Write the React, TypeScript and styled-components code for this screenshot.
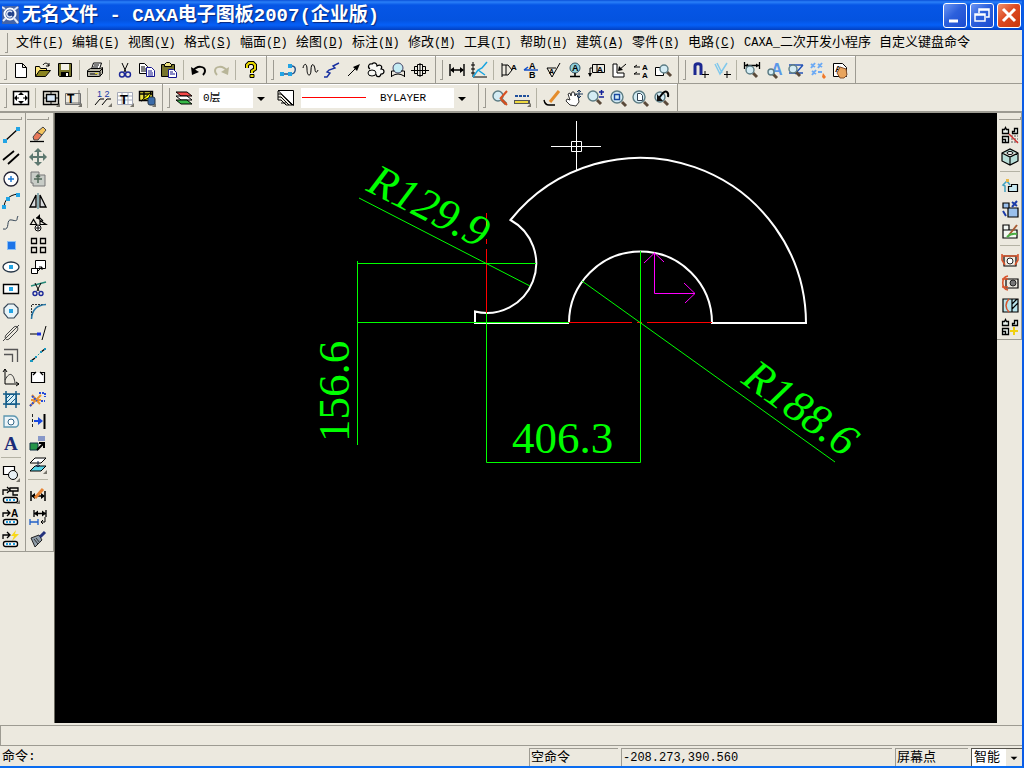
import React from 'react';
import styled, { createGlobalStyle, css } from 'styled-components';

const face = '#ece9df';
const shadow = '#9d9b92';
const mono = '"Liberation Mono", "Noto Sans CJK SC", monospace';

const GlobalStyle = createGlobalStyle`
  * { box-sizing: border-box; }
  body { margin: 0; background: ${face}; color: #000; font-family: ${mono}; font-size: 13px; }
  button, select { font: inherit; color: inherit; }
`;

const Window = styled.div`
  display: flex;
  flex-direction: column;
  height: 100vh;
  background: ${face};
  border-right: 2px solid #0a5ce6;
  border-bottom: 2px solid #0a6cf0;
  overflow: hidden;
`;

const TitleBar = styled.header`
  display: flex;
  align-items: center;
  gap: 3px;
  flex: none;
  height: 30px;
  padding: 0 3px 0 2px;
  margin-right: -2px;
  background: linear-gradient(#0a50d8 0, #2a80f8 2px, #0656e6 5px, #0453e0 20px, #0560f8 25px, #0340c0 30px);
`;

const Title = styled.h1`
  flex: 1;
  margin: 0;
  padding-top: 2px;
  color: #fff;
  font: bold 19px/28px ${mono};
  text-shadow: 1px 1px 1px #0a2a80;
  white-space: nowrap;
`;

const WindowButton = styled.button<{ $danger?: boolean }>`
  display: grid;
  place-items: center;
  width: 24px;
  height: 25px;
  padding: 0;
  border: 1px solid #fff;
  border-radius: 3px;
  background: ${p => p.$danger
    ? 'linear-gradient(135deg, #f0906c, #dd4a22 45%, #c8360c)'
    : 'linear-gradient(135deg, #6c96f4, #2c60dc 45%, #1c4cd0)'};
`;

const MenuBar = styled.nav`
  display: flex;
  align-items: center;
  flex: none;
  height: 25px;
  padding-left: 5px;
  gap: 8px;
`;

const Grip = styled.span<{ $across?: boolean }>`
  flex: none;
  border: 1px solid ${shadow};
  ${p => p.$across
    ? css`width: 22px; height: 3px; border-width: 0 1px 1px 0; margin: 4px 0;`
    : css`width: 3px; height: 20px; border-width: 0 1px 1px 0;`}
`;

const MenuItem = styled.button`
  min-width: 48px;
  padding: 0;
  border: 0;
  background: none;
  line-height: 20px;
  text-align: left;
  white-space: nowrap;
`;

const Latin = styled.span`
  font-size: 12px;
`;

const ToolRow = styled.div`
  display: flex;
  flex: none;
  height: 28px;
  border-top: 1px solid ${shadow};
`;

const ToolGroup = styled.div`
  display: flex;
  align-items: center;
  padding: 0 4px 0 10px;
  border-right: 1px solid ${shadow};
  box-shadow: inset 0 1px #fff;

  > ${Grip} { margin: 0 3px 0 -6px; }
`;

const ToolButton = styled.button`
  display: grid;
  place-items: center;
  flex: none;
  width: 22px;
  height: 22px;
  padding: 0;
  border: 0;
  background: none;
  svg { display: block; overflow: visible; }
`;

const Divider = styled.span<{ $across?: boolean }>`
  flex: none;
  background: #b4b2a4;
  ${p => p.$across
    ? css`width: 20px; height: 1px; margin: 3px 0 4px;`
    : css`width: 1px; height: 20px; margin: 0 4px 0 3px;`}
`;

const Combo = styled.label<{ $w: number; $gap: number }>`
  display: flex;
  align-items: center;
  position: relative;
  width: ${p => p.$w}px;
  height: 20px;
  margin: 0 ${p => p.$gap}px 0 4px;
  background: #fff;
  font-size: 11px;
`;

const Arrow = styled.svg`
  position: absolute;
  right: 0;
  top: 0;
  width: 16px;
  height: 100%;
  background: ${face};
  pointer-events: none;
`;

const ComboSelect = styled.select<{ $indent: number }>`
  appearance: none;
  width: 100%;
  height: 100%;
  padding: 0 16px 0 ${p => p.$indent}px;
  border: 0;
  border-radius: 0;
  background: transparent;
`;

const LineSample = styled.span`
  position: absolute;
  left: 1px;
  top: 9px;
  width: 64px;
  height: 1px;
  background: #f00;
`;

const Workspace = styled.main`
  display: flex;
  flex: 1;
  min-height: 0;
  border-top: 2px solid ${shadow};
`;

const Dock = styled.aside`
  display: flex;
  flex: none;
  align-items: flex-start;
`;

const DockColumn = styled.div<{ $w: number; $left?: boolean }>`
  display: flex;
  flex-direction: column;
  align-items: center;
  width: ${p => p.$w}px;
  padding: ${p => (p.$left ? '0 3px 1px 0' : '0 0 1px 2px')};
  border-right: 1px solid ${shadow};
  border-bottom: 1px solid ${shadow};
`;

const Canvas = styled.section`
  flex: 1;
  min-width: 0;
  overflow: hidden;
  background: #000;
  border-left: 1px solid #6c6a60;
  svg { display: block; }
`;

const CommandPanel = styled.div`
  flex: none;
  height: 21px;
  margin-top: 2px;
  border: 1px solid ${shadow};
  border-right: 0;
`;

const StatusBar = styled.footer`
  display: flex;
  flex: none;
  align-items: center;
  gap: 3px;
  height: 20px;
  padding: 2px 0 0 2px;
  line-height: 18px;
  white-space: nowrap;
`;

const Prompt = styled.span`
  flex: 1;
`;

const StatusField = styled.span<{ $w: number }>`
  width: ${p => p.$w}px;
  height: 18px;
  padding-left: 1px;
  border-left: 1px solid ${shadow};
  border-top: 1px solid ${shadow};
`;

const SnapCombo = styled.label`
  position: relative;
  width: 51px;
  height: 18px;
  background: #fff;
  border: 1px solid #55534c;
  border-width: 1px 0 0 1px;
`;

const L = ({ d, c = '#000', f = 'none', w = 1 }: { d: string; c?: string; f?: string; w?: number }) => (
  <path d={d} stroke={c} fill={f} strokeWidth={w} />
);
const T = ({ x, y, s = 9, c = '#000', b, children }: { x: number; y: number; s?: number; c?: string; b?: boolean; children: React.ReactNode }) => (
  <text x={x} y={y} fontSize={s} fill={c} fontWeight={b ? 'bold' : 'normal'} fontFamily="Liberation Sans, sans-serif">{children}</text>
);
const Lens = ({ x = 8, y = 7, r = 5 }: { x?: number; y?: number; r?: number }) => (
  <>
    <path d={`M${x + r - 1} ${y + r - 1}l4 4`} stroke="#5a4a3a" strokeWidth="3" />
    <circle cx={x} cy={y} r={r} fill="#d4ecf4" stroke="#5c7c84" strokeWidth="1.4" />
  </>
);
const Corner = () => <path d="M18 14v4h-4z" fill="#77756c" />;
const Pts = ({ at }: { at: number[][] }) => (
  <>{at.map(([x, y]) => <rect key={`${x},${y}`} x={x - 2} y={y - 2} width="4" height="4" fill="#22a4e4" />)}</>
);
const Tag = () => (
  <>
    <rect x="1.5" y="11.500" width="14" height="5" rx="2" fill="#fff" stroke="#000" strokeWidth="1.4" />
    <path d="M4 14h2M7 14h2M11 14h2" stroke="#20a0e0" strokeWidth="2" />
  </>
);

const icons: Record<string, React.ReactNode> = {
  新建: <L d="M3.500 2.500h7l4 4v10h-11zM10.500 2.500v4h4" f="#fff" />,
  打开: <><L d="M1.500 15.500v-10h4l1 2h6v2" f="#ffe880" /><L d="M1.500 15.500l4-6h11l-5 6z" f="#8a8420" /><L d="M9 4c2-3 5-2 6 1m0-3v3h-3" /></>,
  保存: <><L d="M2.500 2.500h13v13h-12l-1-1z" f="#77752c" /><path d="M5 3h8v6H5z" fill="#f4f2e8" /><path d="M5 11h8v4H5z" fill="#000" /><path d="M10 12h2v3h-2z" fill="#fff" /></>,
  打印: <><L d="M5.500 8l2-6h8l-2 6" f="#fff" /><L d="M8 4h5M7 6h5" /><L d="M1.500 9.500l3-2h10l2-1v6l-3 3h-12z" f="#b8b6a8" /><L d="M2 10.500h12v5M14 10l2-2M4 13h7" /><path d="M9 12h3v1H9z" fill="#e0d020" /></>,
  剪切: <><L d="M6 2l4 9M12 2L8 11" /><circle cx="6" cy="13.500" r="2.500" fill="none" stroke="#1c2898" strokeWidth="1.400" /><circle cx="12" cy="13.500" r="2.500" fill="none" stroke="#1c2898" strokeWidth="1.400" /></>,
  复制: <><L d="M1.500 2.500h5l3 3v7h-8zM3 6h4M3 8h5M3 10h5" f="#fff" /><L d="M8.500 6.500h5l3 3v6h-8zM10 10h4M10 12h5M10 14h5" c="#14148c" f="#fff" /></>,
  粘贴: <><L d="M1.500 3.500h13v12h-13z" f="#77752c" /><L d="M4.500 5.500v-2l2-2h3l2 2v2z" f="#ece080" /><L d="M8.500 8.500h5l3 3v5h-8zM10 11h3M10 13h5" c="#14148c" f="#fff" /></>,
  撤销: <><L d="M3 10c4-6 12-5 12 0 0 2-1 3-2 4" w={2} /><path d="M1 6l1 8 7-3z" /></>,
  重做: <><L d="M15 10C11 4 3 5 3 10c0 2 1 3 2 4" w={2} c="#b8b598" /><path d="M17 6l-1 8-7-3z" fill="#b8b598" /></>,
  帮助: <><L d="M5 7V4l2-2h4l2 2v4l-3 2v2" c="#000" w={4} /><L d="M5 7V4l2-2h4l2 2v4l-3 2v2" c="#e8d800" w={2} /><path d="M8 13.500h4v3H8z" fill="#e8d800" stroke="#000" /></>,
  连接: <><L d="M2 13h10c5 0 6-8 1-8h-2" c="#205088" w={1.400} /><Pts at={[[3, 13], [11, 13], [11, 5]]} /></>,
  波浪线: <L d="M2 7c1-5 4-5 4 1 0 8 4 8 4 1s3-7 4-1c0 4 2 4 3 1" />,
  双折线: <L d="M1 16h3l3-4-3-1 2-2 6-2-2-2 6-3" c="#1830a0" w={1.400} />,
  箭头: <><L d="M3 15L12 6" /><path d="M15 3L8 6l4 4z" /></>,
  轮廓: <><L d="M3 8C0 6 2 2 5 3c2-2 5-1 5 2 3-2 6 0 4 3 4 0 4 5 0 5-1 4-5 3-5 0" f="#f8f8f4" w={1.200} /><ellipse cx="5" cy="12" rx="4" ry="3" fill="#f8f8f4" stroke="#000" /></>,
  圆孔: <><circle cx="9" cy="7" r="5" fill="#c4ecf4" stroke="#446" /><L d="M2.500 16v-6h3M12 10h3.500v6M3 15q6-4 12 0" /></>,
  孔轴: <><L d="M3.500 5.500h11v7h-11z" /><path d="M6.500 3.500h5v11h-5z" fill="#f4f2ea" stroke="#000" /><L d="M0 9.500h18M9 2v14" /></>,
  尺寸标注: <><L d="M2 3v12M16 3v12M3 9h12" w={1.400} /><path d="M2 9l4-3v6zM16 9l-4-3v6z" /></>,
  坐标标注: <><L d="M3 1v15h14M1 4h4M1 8h4M1 12h4" /><L d="M3 16L8 9l4-2 5-6M8 9l7 5" c="#18a4e0" w={1.500} /></>,
  倒角标注: <><L d="M2 2v14M2 4h6l4 5-4 5H2M6 4v10" /><T x={11} y={9} s={8} b>A</T></>,
  引出说明: <><T x={7} y={8} s={9} b>A</T><T x={7} y={17} s={9} b>B</T><L d="M2 9h14M2 9l4-3" c="#1450c8" w={1.500} /></>,
  粗糙度: <><L d="M3 7l5 9 8-14M3 7h9" /><T x={5} y={13} s={7} b>A</T></>,
  基准代号: <><circle cx="9" cy="7" r="5" fill="#8fd0dc" stroke="#356" /><T x={6} y={10} s={9} b>A</T><L d="M9 12v3M4 15.500h10" w={1.600} /></>,
  形位公差: <><L d="M4.500 3.500h12v8h-12zM9 4v7M4 7H2v8" /><T x={9} y={11} s={8} b>A</T><path d="M0 12h4l-2 4z" /></>,
  焊接符号: <><L d="M3 3v13h11v-4H7V3zM16 3l-7 6" f="#fff" /><path d="M8 10l1-5 4 4z" /></>,
  剖切符号: <><L d="M2 6h6M2 6l3-2M2 13h6M2 13l3-2" /><T x={10} y={9} s={8} b>A</T><T x={10} y={17} s={8} b>A</T></>,
  局部放大: <><L d="M1.500 6.500h8v8h-8z" f="#fff" /><Lens x={10} y={8} r={4} /></>,
  捕捉设置: <><L d="M4 14V5c0-3 6-3 6 0v9" c="#1c2890" w={3} /><L d="M14 10v7M11 13.500h7" /></>,
  正交: <><L d="M2 3l5 10L14 2M4 2l5 10" c="#80c8ec" w={1.500} /><L d="M14 10v7M11 13.500h7" /></>,
  查询距离: <><L d="M1.500 1v7M16.500 1v7M2 4.500h14" w={1.300} /><path d="M2 4.500l3-2v4zM16 4.500l-3-2v4z" /><Lens x={7} y={9} r={4} /></>,
  查询文字: <><T x={6} y={14} s={16} c="#5c98e8" b>A</T><Lens x={6} y={11} r={3} /></>,
  查询面积: <><L d="M2 4h14M2 12h14M16 4L8 13" c="#2454b8" w={1.500} /><Lens x={6} y={8} r={4} /></>,
  阵列点: <><L d="M2 3l4 3M6 2L2 7M9 3l4 3M13 2L9 7M3 10l4 3M7 9l-4 5M9 11h4" c="#6caaf4" w={2} /><path d="M14 12l3 4-2 2-2-2z" fill="#f07828" /></>,
  图纸属性: <><L d="M2.500 2.500h9l4 4v9h-13z" f="#fff" /><T x={4} y={11} s={9} b>A</T><path d="M6 12l3-6 6 2 1 6-3 3H9z" fill="#e8a45c" stroke="#84502c" /></>,
  显示全部: <><L d="M1.500 2.500h15v13h-15z" w={1.500} f="#fff" /><path d="M9 3l3 3H6zM9 15l3-3H6zM2 9l3-3v6zM16 9l-3-3v6z" /><L d="M5 9h2M11 9h2" /></>,
  图幅设置: <><L d="M1.500 2.500h15v13h-15z" w={1.400} /><L d="M4.500 5.500h9v7h-9z" f="#d8e8f8" w={1.400} /><L d="M9 2v4M9 12v4M1 9h4M13 9h4" /><Corner /></>,
  标题栏: <><L d="M1.500 4.500h15v11h-15zM15 1v15M1 14h16" c="#707070" /><T x={3} y={14} s={12} b>T</T><Corner /></>,
  序号: <><T x={3} y={8} s={9} c="#1838a8">1 2</T><L d="M1 16l5-6h4M8 16l5-6h4" /><Corner /></>,
  明细表: <><L d="M1.500 3.500h15v12h-15zM6 3v12M12 3v12M1 7h15M1 11h15" c="#a5aab8" f="#fff" /><T x={4} y={15} s={13} b>T</T><Corner /></>,
  表头: <><L d="M1.500 2.500h13v9h-13zM1 5h13M6 2v9" f="#ece040" w={1.400} /><path d="M3 12l10-9-2 6z" stroke="#000" fill="#ff0" /><rect x="10" y="8" width="7" height="8" rx="2" fill="#3c6ca8" stroke="#234" /><Corner /></>,
  图层: <><L d="M1 3h11l5 4H6z" f="#f44848" /><L d="M1 7h11l5 4H6z" f="#fff" /><L d="M1 11h11l5 4H6z" f="#38b848" /></>,
  线型: <><path d="M1 1.500h15.500v15z" fill="#fff" stroke="#000" /><L d="M1 2v3h3L15 16M1 5v3h3l8 8M1 8v3h3l5 5M4 14h5M9 16h7" /></>,
  显示窗口: <><Lens x={7} y={7} r={5} /><L d="M16 2l-7 8M10 10l6 6" c="#d85020" w={2} /></>,
  线宽: <><path d="M2 7h14" stroke="#20509c" strokeWidth="2" strokeDasharray="3 1" /><path d="M1 11h16v4H1z" fill="#555" /><L d="M2 13h13" c="#ecd840" w={2} /><Corner /></>,
  重画: <><L d="M16 2L7 13" c="#e48c2c" w={3} /><L d="M1 11q1 5 5 5h6" w={1.400} /></>,
  动态平移: <><path d="M5 16l-4-4 1-2 3 1-2-6 2-1 1 3 1-4h2l1 4 1-2 2 2 1 6-3 4z" fill="#fff" stroke="#333" /><L d="M14 1v8M10 5h8M12 3l2-2 2 2M12 7l2 2 2-2" c="#183458" /></>,
  动态缩放: <><Lens x={6} y={7} r={5} /><L d="M12 3h5M14.500 1v5M12 8h5" c="#122098" w={1.500} /></>,
  窗口缩放: <><Lens x={8} y={8} r={6} /><L d="M5.500 5.500h5v5h-5z" c="#1848a0" w={1.400} /></>,
  全部缩放: <><Lens x={8} y={8} r={6} /><L d="M6.500 4.500h3l2 2v5h-5z" c="#345" f="#fff" /></>,
  显示上一步: <><Lens x={7} y={8} r={5} /><L d="M6 9l4-5c3-3 6-1 5 4" w={2} /><path d="M4 5v7h6z" fill="#111" /></>,
  直线: <><L d="M3 15L16 3" w={1.300} /><Pts at={[[3, 15], [16, 3]]} /></>,
  平行线: <><L d="M1 12L12 3M6 16L17 6" w={1.800} /></>,
  圆: <><circle cx="9" cy="9" r="7" fill="#fff" stroke="#223" strokeWidth="1.300" /><L d="M9 6v6M6 9h6" c="#1874d0" w={1.400} /></>,
  圆弧: <><L d="M2 16C2 8 7 3 16 2" /><Pts at={[[2, 15], [6, 7], [16, 3]]} /></>,
  样条: <L d="M1 15c8 2 2-11 9-9s4-1 6-4" c="#345" />,
  点: <rect x="5.500" y="5.500" width="8" height="8" fill="#1c74e8" stroke="#8cc0f4" />,
  椭圆: <><ellipse cx="9" cy="9" rx="8" ry="5" fill="#fff" stroke="#234" strokeWidth="1.300" /><Pts at={[[9, 9]]} /></>,
  矩形: <><L d="M1.500 4.500h15v9h-15z" f="#fff" w={1.400} /><Pts at={[[9, 9]]} /></>,
  正多边形: <><path d="M6 2h6l4 4v5l-4 5H6l-4-5V6z" fill="#e8f4f8" stroke="#345" strokeWidth="1.200" /><Pts at={[[9, 9]]} /></>,
  中心线: <><L d="M4 11l8-8c3-2 5 1 3 4l-8 8c-3 2-5-1-3-4zM1 17L17 1" c="#444" /></>,
  等距线: <><L d="M2 3.500h13.500V16M2 8.500h8.500V16" c="#555" w={1.300} /></>,
  公式曲线: <><L d="M3 1v15h14M1 4l2-3 2 3M14 14l3 2-3 2" /><L d="M3 12c5-10 9-5 10 3" c="#333" /></>,
  剖面线: <><L d="M4.500 4.500h10v10h-10z" f="#d8f0f8" c="#146090" /><L d="M4 1v17M14 1v17M1 4h17M1 14h17" c="#145c88" w={1.500} /><L d="M5 8l3-3M5 12l7-7M8 14l6-6" c="#145c88" /></>,
  填充: <><path d="M2 4h9c6 0 7 10 3 11H2z" fill="#ecf4f8" stroke="#5c96b0" strokeWidth="1.300" /><circle cx="9" cy="10" r="3" fill="#fff" stroke="#368" /></>,
  文字: <text x="2" y="16" fontSize="19" fontWeight="bold" fontFamily="Liberation Serif, serif" fill="#1c2c78">A</text>,
  块创建: <><L d="M1.500 2.500h11v8h-11z" f="#fff" w={1.200} /><circle cx="11" cy="11" r="4.500" fill="#e8f0f4" stroke="#000" /><Corner /></>,
  块插入: <><L d="M1 9V4h5M5 1l3 3-3 3M8 2h8v3H8zM11 5v4h5" w={1.300} /><Tag /><Corner /></>,
  块属性: <><L d="M1 9V5h6M5 2l3 3-3 3" w={1.300} /><T x={9} y={9} s={10} b>A</T><Tag /></>,
  块打散: <><L d="M1 9V5h6M5 2l3 3-3 3" w={1.300} /><path d="M14 0l-5 6h3l-2 5 7-7h-4z" fill="#f8d818" /><Tag /></>,
  删除: <><L d="M1 15.500h14" w={1.300} /><path d="M4 11l4-5 5 3-4 5H5z" fill="#e87858" stroke="#444" /><path d="M8 6l6-5 3 3-4 5z" fill="#f4c45c" stroke="#444" /></>,
  平移: <><L d="M9 2v14M2 9h14" c="#5d786f" w={2} /><path d="M9 0l4 4H5zM9 18l4-4H5zM0 9l4-4v8zM18 9l-4-4v8z" fill="#5d786f" /></>,
  平移复制: <><L d="M2 2h8v3h6v11H4v-3H2z" f="#c8ccc6" c="#777" /><L d="M9 5v8M5 9h8M7 7l2-2 2 2" c="#506858" w={1.500} /></>,
  镜像: <><L d="M7 3v12H1zM11 3v12h6z" w={1.300} f="#d9dbdc" /><L d="M9 1v16" c="#286c80" /></>,
  旋转: <><L d="M1.500 10.500l3-5 3 5zM7 4h4l3 3M11 6.500l6 4h-6z" w={1.200} /><path d="M11 0v6L7 4z" /><circle cx="9" cy="14" r="3" fill="#fff" stroke="#000" /><L d="M9 12v4M7 14h4" /></>,
  阵列: <L d="M2.500 2.500h5v5h-5zM11.500 2.500h5v5h-5zM2.500 11.500h5v5h-5zM11.500 11.500h5v5h-5z" w={1.300} />,
  缩放: <L d="M6.500 2.500h10v8h-10zM2.500 10.500h6v5h-6zM9 13l4-4M10 9h3v3" f="#fff" />,
  裁剪: <><L d="M2 6l15-4" c="#268878" w={1.400} /><L d="M6 3l4 8M12 3L8 11" /><circle cx="6" cy="13.500" r="2" fill="none" stroke="#1c2898" strokeWidth="1.400" /><circle cx="12" cy="13.500" r="2" fill="none" stroke="#1c2898" strokeWidth="1.400" /></>,
  过渡: <><path d="M2.500 17V2.500H17" fill="none" stroke="#333" strokeDasharray="2 1" /><L d="M2.500 17C3 8 8 3 17 2.500" c="#2474a4" w={1.500} /></>,
  齐边: <><L d="M1 10h8M17 2l-4 14" /><L d="M8 10h4" c="#1830e0" w={3} /></>,
  打断: <><L d="M2 15l4-3M12 6l4-3" w={1.500} /><path d="M6 12l6-6" stroke="#1c9c9c" strokeDasharray="2 2" /><path d="M1 14h3v2H1zM6 10h2v2H6zM11 5h2v2h-2zM15 2h2v2h-2z" fill="#1898c0" /></>,
  拉伸: <><L d="M6 4.500H2.500v10h13v-10H12M4 7l3-3M14 7l-3-3" w={1.200} f="#fff" /></>,
  打散: <><L d="M1 16L12 5M3 5l8 9M2 10h10" c="#ec9430" w={2} /><path d="M1 16l4-4M3 6l5 5M10 3h6v4M12 11h4" stroke="#284cd8" strokeWidth="2" strokeDasharray="2 1" fill="none" /></>,
  对齐: <><path d="M3.500 2v15" stroke="#222" strokeDasharray="3 2" /><L d="M15.500 2v15" w={2} /><path d="M5 8h4V5l5 4-5 4v-3H5z" fill="#1848e0" /></>,
  格式刷: <><path d="M1 9h8v7H1z" fill="#249448" stroke="#134" /><path d="M9 2h7v5H9z" fill="#8898c8" /><L d="M8 16l6-6M10 9h5v5" w={2} /></>,
  图层转换: <><L d="M6 2h11l-5 5H1z" f="#fff" /><L d="M6 10h11l-5 5H1z" f="#58d4e8" /><L d="M9 5v6M7 9l2 2 2-2" c="#124" /><Corner /></>,
  标注编辑: <><L d="M2 5v10M16 5v10M3 10h12" w={1.500} /><path d="M2 10l4-3v6zM16 10l-4-3v6z" /><L d="M14 3l-8 9" c="#e88434" w={3} /></>,
  尺寸驱动: <><L d="M5 2v7M17 2v7M5 5.500h12" w={1.300} /><path d="M5 5.500l4-3v6zM17 5.500l-4-3v6z" /><L d="M1 11v6M9 11v6M1 14h8" c="#2060c8" w={1.300} /><L d="M16 9v5h-4M14 12l-2 2 2 2" /></>,
  样式刷: <><path d="M2 8l8-3 3 5-7 7z" fill="#8e9ca8" stroke="#222" /><L d="M11 7l5-5" c="#24327c" w={3} /><L d="M5 9l4 5M7 8l4 5" c="#333" /></>,
  图库: <><L d="M1.500 3.500h2l1-2 1 2h2v4h-6zM11.500 5.500h2v-3h3v5h-5zM1.500 10.500h6v6h-6zM1.500 13.500h3v3" w={1.300} f="#e8f0ec" /><path d="M10 10h7M10 13h7M10 16h7" stroke="#555" strokeDasharray="2 1" /><L d="M8 8l9 9" c="#d03030" w={1.400} /></>,
  三维: <><L d="M1 5l8-4 8 4v8l-8 4-8-4zM1 5l8 4 8-4M9 9v8" f="#b8ded8" w={1.200} /><ellipse cx="9" cy="5" rx="3" ry="1.500" fill="#fff" stroke="#000" /></>,
  提取图符: <><L d="M7.500 8.500h3v-2h6v7h-9z" f="#c8e8f0" w={1.200} /><L d="M4 14V8L2 7l4-4 3 4" c="#40a0c0" w={1.500} /><path d="M5 1h3v3H5z" fill="#e8b848" /></>,
  定义图符: <><L d="M2 3h6v5H2zM7 8h10v9H7z" f="#9ac0ec" w={1.200} /><L d="M2 11l3 5M11 2l5 4M16 1l-5 6" c="#1c3ca8" w={2} /></>,
  编辑图符: <><L d="M2 3h6v5H2zM2 8h14v8H2z" f="#f4f8f4" w={1.200} /><L d="M16 3L8 13" c="#a85c34" w={2} /><L d="M6 15q4-4 10-3" c="#4cae44" w={2} /></>,
  螺栓: <><L d="M3 4h12v10H3z" w={1.200} /><circle cx="9" cy="9" r="3" fill="#fff" stroke="#222" /><L d="M1 2v6l3 5M17 2v6l-3 5M1 4h16" c="#d8542c" w={1.600} /></>,
  零件断面: <><L d="M5 5h12v9H5z" w={1.200} /><circle cx="12" cy="9" r="3" fill="#777" stroke="#222" /><L d="M7 2c-7 1-7 13 0 14M1 5h6M1 13h6" c="#d8542c" w={1.600} /></>,
  剖面图: <><L d="M2 3h15v13H2zM11 3v13M11 8l5-5M11 13l6-6" f="#b8e4ec" w={1.200} /><L d="M8 3c-4 4-4 9 0 13" c="#d8542c" w={1.500} /></>,
  图库管理: <><L d="M1.500 3.500h2l1-2 1 2h2v4h-6zM11.500 5.500h2v-3h3v5h-5zM1.500 10.500h6v6h-6zM1.500 13.500h3v3" w={1.300} f="#e8f0ec" /><L d="M13 9v8M9 13h8" c="#f0d010" w={2} /></>,
};

const Tool = ({ name }: { name: string }) => (
  <ToolButton type="button" aria-label={name}>
    <svg width="18" height="18" viewBox="0 0 18 18" aria-hidden="true">{icons[name]}</svg>
  </ToolButton>
);

/* A "|" entry in a tool list is a divider. */
const Tools = ({ list, across }: { list: string; across?: boolean }) => (
  <>{list.split(' ').map((n, i) => (n === '|' ? <Divider key={i} $across={across} /> : <Tool key={n} name={n} />))}</>
);

const ComboArrow = () => (
  <Arrow viewBox="0 0 16 20" aria-hidden="true"><path d="M4 9h8l-4 4z" /></Arrow>
);

const menus = [
  ['文件', 'F'], ['编辑', 'E'], ['视图', 'V'], ['格式', 'S'], ['幅面', 'P'], ['绘图', 'D'], ['标注', 'N'],
  ['修改', 'M'], ['工具', 'T'], ['帮助', 'H'], ['建筑', 'A'], ['零件', 'R'], ['电路', 'C'],
];

const Drawing = () => (
  <svg width="942" height="610" viewBox="55 113 942 610" role="img" aria-label="图形">
    <g fill="none" stroke="#fff" strokeWidth="2">
      <path d="M569 323H475V311.500A49.500 49.500 0 0 0 510.500 220A166 166 0 0 1 806 323H712A71.500 71.500 0 0 0 569 323" />
    </g>
    <g fill="none" stroke="#f00">
      <path d="M569 322.500H632M637 322.500H642M647 322.500H712M486.500 213V233M486.500 239V244M486.500 249V313" />
    </g>
    <g fill="none" stroke="#0f0">
      <path d="M357 322.500H569M357 263.500H536M357.500 261V445M486.500 313V462.500H640.500V251" />
      <path d="M359 198L530 286M582 281L835 462" />
    </g>
    <path d="M654.500 253V293.500H695M644 263L654.500 253L664 262M684 283L695 293.500L685 303" fill="none" stroke="#f0f" />
    <path d="M551 146.500H601M576.500 121V170M571.500 141.500h10v10h-10z" fill="none" stroke="#fff" />
    <g fill="#0f0" fontFamily="Liberation Serif, serif" fontSize="45">
      <text x="512" y="453">406.3</text>
      <text transform="translate(349 442) rotate(-90)">156.6</text>
      <text transform="translate(365 190) rotate(27)" fontStyle="italic">R129.9</text>
      <text transform="translate(740 382) rotate(36)" fontStyle="italic">R188.6</text>
    </g>
  </svg>
);

export default function App() {
  return (
    <>
      <GlobalStyle />
      <Window>
        <TitleBar>
          <svg width="17" height="18" viewBox="0 0 17 18" aria-hidden="true">
            <rect width="17" height="18" fill="#4464a8" />
            <circle cx="8" cy="8" r="5.500" fill="#24448c" stroke="#fff" strokeWidth="2" />
            <path d="M10 6a3 3 0 1 0 0 4" fill="none" stroke="#dfe8fa" strokeWidth="1.500" />
            <path d="M0 1l3 2M1 15l3-3M16 1l-4 3M11 11l5 6" stroke="#dfe8fa" strokeWidth="2" />
          </svg>
          <Title>无名文件 - CAXA电子图板2007(企业版)</Title>
          <WindowButton type="button" aria-label="最小化">
            <svg width="18" height="18" aria-hidden="true"><path d="M3 15h9" stroke="#fff" strokeWidth="3" /></svg>
          </WindowButton>
          <WindowButton type="button" aria-label="还原">
            <svg width="18" height="18" aria-hidden="true"><path d="M6 7V3h10v8h-3M6 4h10M2 8h10v7H2zM2 9h10" stroke="#fff" strokeWidth="1.500" fill="none" /></svg>
          </WindowButton>
          <WindowButton type="button" aria-label="关闭" $danger>
            <svg width="18" height="18" aria-hidden="true"><path d="M3 3l12 12M15 3L3 15" stroke="#fff" strokeWidth="3" /></svg>
          </WindowButton>
        </TitleBar>

        <MenuBar>
          <Grip />
          {menus.map(([label, key]) => (
            <MenuItem key={key} type="button">{label}<Latin>(<u>{key}</u>)</Latin></MenuItem>
          ))}
          <MenuItem type="button"><Latin>CAXA_</Latin>二次开发小程序</MenuItem>
          <MenuItem type="button">自定义键盘命令</MenuItem>
        </MenuBar>

        <ToolRow>
          <ToolGroup><Grip /><Tools list="新建 打开 保存 | 打印 | 剪切 复制 粘贴 | 撤销 重做 | 帮助" /></ToolGroup>
          <ToolGroup><Grip /><Tools list="连接 波浪线 双折线 箭头 轮廓 圆孔 孔轴" /></ToolGroup>
          <ToolGroup><Grip /><Tools list="尺寸标注 坐标标注 | 倒角标注 引出说明 粗糙度 基准代号 形位公差 焊接符号 剖切符号 局部放大" /></ToolGroup>
          <ToolGroup><Grip /><Tools list="捕捉设置 正交 | 查询距离 查询文字 查询面积 阵列点 图纸属性" /></ToolGroup>
        </ToolRow>
        <ToolRow>
          <ToolGroup><Grip /><Tools list="显示全部 | 图幅设置 标题栏 | 序号 明细表 表头" /></ToolGroup>
          <ToolGroup>
            <Grip />
            <Tool name="图层" />
            <Combo $w={70} $gap={6}>
              <ComboSelect $indent={4} aria-label="当前图层"><option>0层</option></ComboSelect>
              <ComboArrow />
            </Combo>
            <Tool name="线型" />
            <Combo $w={169} $gap={4}>
              <LineSample />
              <ComboSelect $indent={79} aria-label="线型"><option>BYLAYER</option></ComboSelect>
              <ComboArrow />
            </Combo>
          </ToolGroup>
          <ToolGroup><Grip /><Tools list="显示窗口 线宽 | 重画 动态平移 动态缩放 窗口缩放 全部缩放 显示上一步" /></ToolGroup>
        </ToolRow>

        <Workspace>
          <Dock>
            <DockColumn $w={26} $left>
              <Grip $across />
              <Tools across list="直线 平行线 圆 圆弧 样条 点 椭圆 矩形 正多边形 中心线 等距线 公式曲线 剖面线 填充 文字 | 块创建 块插入 块属性 块打散" />
            </DockColumn>
            <DockColumn $w={28} $left>
              <Grip $across />
              <Tools across list="删除 平移 平移复制 镜像 旋转 阵列 缩放 裁剪 过渡 齐边 打断 拉伸 打散 对齐 格式刷 图层转换 | 标注编辑 尺寸驱动 样式刷" />
            </DockColumn>
          </Dock>
          <Canvas><Drawing /></Canvas>
          <Dock>
            <DockColumn $w={25}>
              <Grip $across />
              <Tools across list="图库 三维 | 提取图符 定义图符 编辑图符 | 螺栓 零件断面 剖面图 图库管理" />
            </DockColumn>
          </Dock>
        </Workspace>

        <CommandPanel />
        <StatusBar>
          <Prompt>命令:</Prompt>
          <StatusField $w={89}>空命令</StatusField>
          <StatusField $w={271}><Latin>-208.273,390.560</Latin></StatusField>
          <StatusField $w={73}>屏幕点</StatusField>
          <SnapCombo>
            <ComboSelect $indent={2} aria-label="捕捉方式"><option>智能</option></ComboSelect>
            <ComboArrow />
          </SnapCombo>
        </StatusBar>
      </Window>
    </>
  );
}
